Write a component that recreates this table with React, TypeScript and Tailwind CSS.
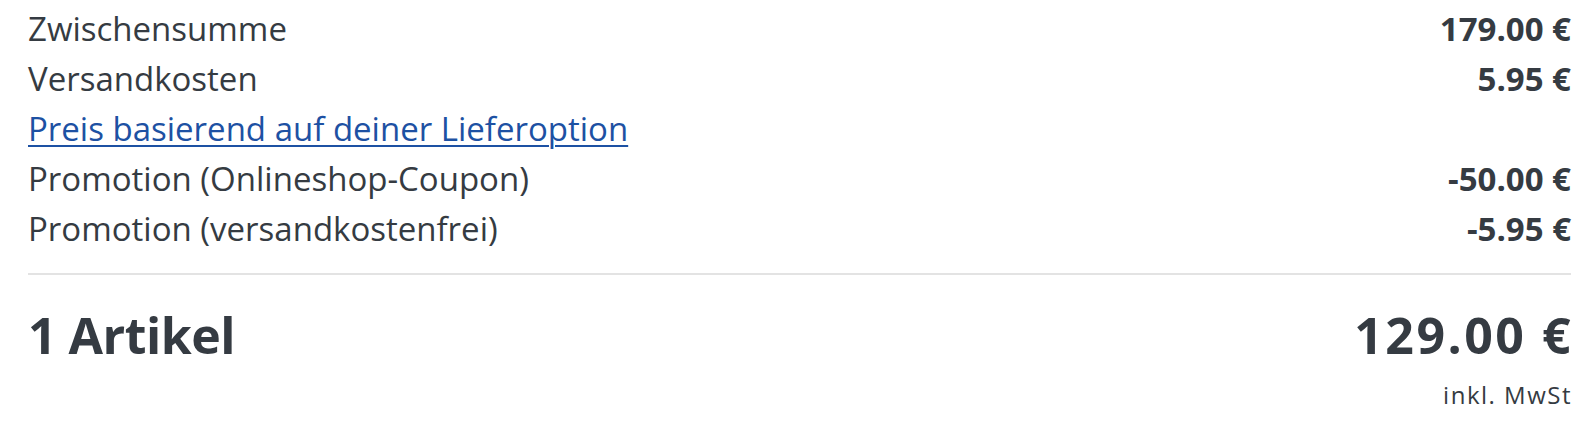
import React from "react";

const rows: { label: string; value?: string; link?: boolean }[] = [
  { label: "Zwischensumme", value: "179.00 €" },
  { label: "Versandkosten", value: "5.95 €" },
  { label: "Preis basierend auf deiner Lieferoption", link: true },
  { label: "Promotion (Onlineshop-Coupon)", value: "-50.00 €" },
  { label: "Promotion (versandkostenfrei)", value: "-5.95 €" },
];

export default function App() {
  return (
    <div
      className="w-[1594px] h-[432px] bg-white pl-[28px] pr-[23px] pt-[4px] text-[#353b42]"
      style={{ fontFamily: '"Open Sans", "Noto Sans", sans-serif' }}
    >
      <div className="flex flex-col">
        {rows.map((r) => (
          <div key={r.label} className="flex justify-between h-[50px] leading-[50px] text-[33px]">
            {r.link ? (
              <a href="#" className="text-[#1d51a3] underline decoration-2 underline-offset-[4px]">
                {r.label}
              </a>
            ) : (
              <span>{r.label}</span>
            )}
            {r.value && <span className="font-bold">{r.value}</span>}
          </div>
        ))}
      </div>
      <div className="mt-[19px] border-t-2 border-[#e3e3e3]" />
      <div className="mt-[35px] flex justify-between items-baseline text-[50px] leading-[50px] font-bold">
        <span className="tracking-[-0.5px]">1 Artikel</span>
        <span className="tracking-[2.5px] -mr-[2px]">129.00 €</span>
      </div>
      <div className="mt-[23px] flex justify-end text-[24px] leading-[23px] tracking-[1.5px]">
        <span className="-mr-[1px]">inkl. MwSt</span>
      </div>
    </div>
  );
}
